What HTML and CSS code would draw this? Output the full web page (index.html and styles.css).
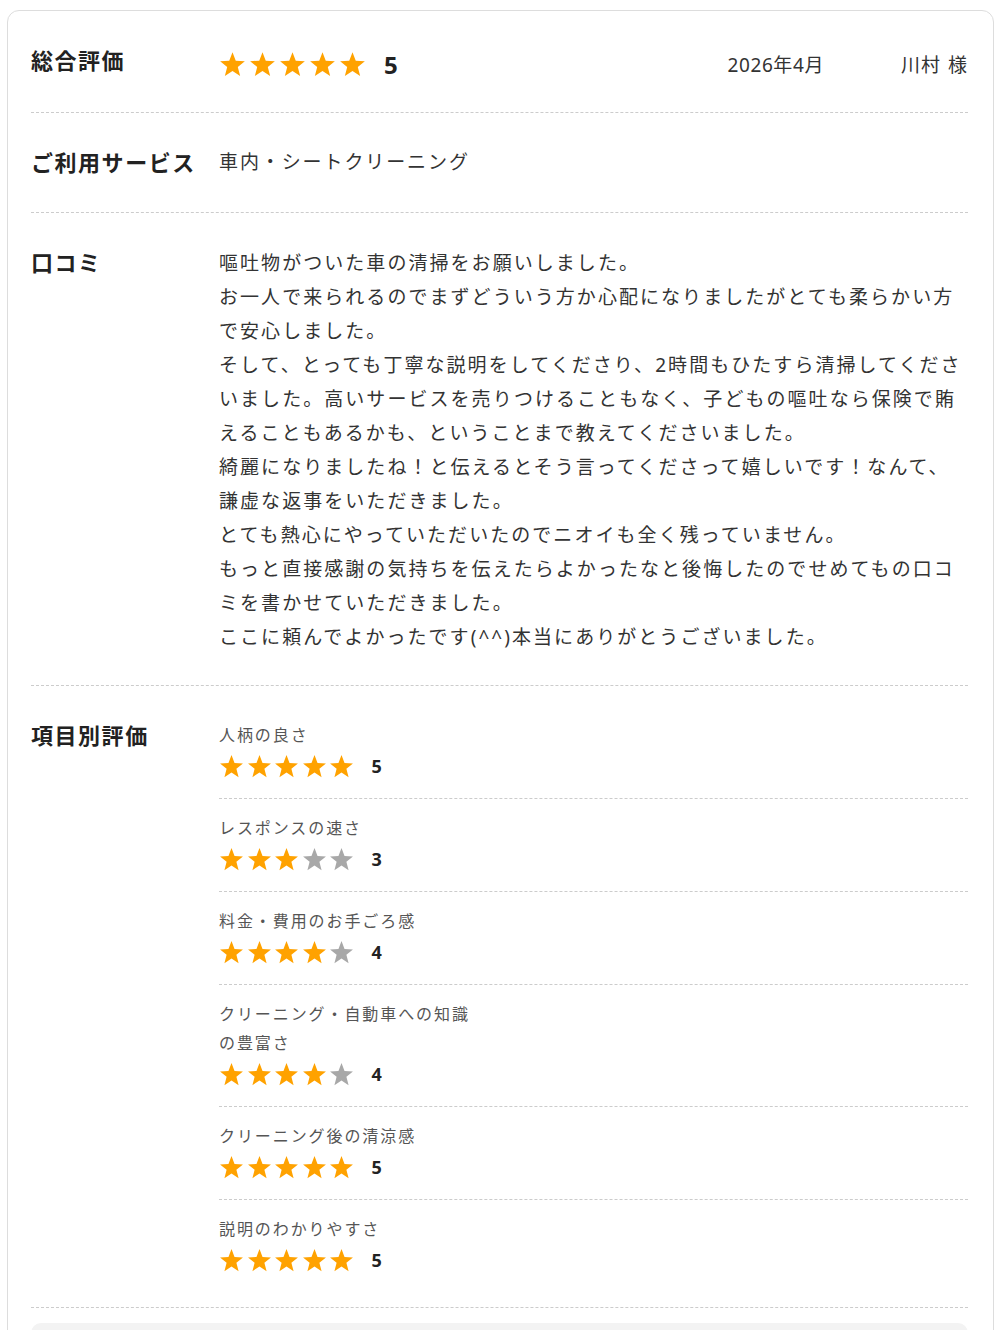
FILE: index.html
```html
<!DOCTYPE html>
<html lang="ja">
<head>
    <meta charset="UTF-8">
    <meta name="viewport" content="width=device-width, initial-scale=1.0">
    <title>口コミ</title>
    <link rel="stylesheet" href="styles.css">
</head>
<body>

    <svg width="0" height="0" class="defs">
        <symbol id="star" viewBox="0 0 24 24">
            <polygon points="12,1 14.9,8.6 23,9.1 16.7,14.2 18.8,22.2 12,17.7 5.2,22.2 7.3,14.2 1,9.1 9.1,8.6"/>
        </symbol>
    </svg>

    <div class="review">

        <div class="row summary">
            <div class="label">総合評価</div>
            <div class="value">
                <div class="stars big">
                    <svg class="on"><use href="#star"/></svg>
                    <svg class="on"><use href="#star"/></svg>
                    <svg class="on"><use href="#star"/></svg>
                    <svg class="on"><use href="#star"/></svg>
                    <svg class="on"><use href="#star"/></svg>
                    <span class="num">5</span>
                </div>
                <span class="date">2026年4月</span>
                <span class="name">川村 様</span>
            </div>
        </div>

        <div class="row">
            <div class="label">ご利用サービス</div>
            <div class="value service">車内・シートクリーニング</div>
        </div>

        <div class="row">
            <div class="label">口コミ</div>
            <div class="value comment">
                嘔吐物がついた車の清掃をお願いしました。<br>
                お一人で来られるのでまずどういう方か心配になりましたがとても柔らかい方で安心しました。<br>
                そして、とっても丁寧な説明をしてくださり、2時間もひたすら清掃してくださいました。高いサービスを売りつけることもなく、子どもの嘔吐なら保険で賄えることもあるかも、ということまで教えてくださいました。<br>
                綺麗になりましたね！と伝えるとそう言ってくださって嬉しいです！なんて、謙虚な返事をいただきました。<br>
                とても熱心にやっていただいたのでニオイも全く残っていません。<br>
                もっと直接感謝の気持ちを伝えたらよかったなと後悔したのでせめてもの口コミを書かせていただきました。<br>
                ここに頼んでよかったです(^^)本当にありがとうございました。
            </div>
        </div>

        <div class="row ratings">
            <div class="label">項目別評価</div>
            <div class="value items">

                <div class="item">
                    <div class="item-name">人柄の良さ</div>
                    <div class="stars small">
                        <svg class="on"><use href="#star"/></svg>
                        <svg class="on"><use href="#star"/></svg>
                        <svg class="on"><use href="#star"/></svg>
                        <svg class="on"><use href="#star"/></svg>
                        <svg class="on"><use href="#star"/></svg>
                        <span class="num">5</span>
                    </div>
                </div>

                <div class="item">
                    <div class="item-name">レスポンスの速さ</div>
                    <div class="stars small">
                        <svg class="on"><use href="#star"/></svg>
                        <svg class="on"><use href="#star"/></svg>
                        <svg class="on"><use href="#star"/></svg>
                        <svg class="off"><use href="#star"/></svg>
                        <svg class="off"><use href="#star"/></svg>
                        <span class="num">3</span>
                    </div>
                </div>

                <div class="item">
                    <div class="item-name">料金・費用のお手ごろ感</div>
                    <div class="stars small">
                        <svg class="on"><use href="#star"/></svg>
                        <svg class="on"><use href="#star"/></svg>
                        <svg class="on"><use href="#star"/></svg>
                        <svg class="on"><use href="#star"/></svg>
                        <svg class="off"><use href="#star"/></svg>
                        <span class="num">4</span>
                    </div>
                </div>

                <div class="item">
                    <div class="item-name">クリーニング・自動車への知識の豊富さ</div>
                    <div class="stars small">
                        <svg class="on"><use href="#star"/></svg>
                        <svg class="on"><use href="#star"/></svg>
                        <svg class="on"><use href="#star"/></svg>
                        <svg class="on"><use href="#star"/></svg>
                        <svg class="off"><use href="#star"/></svg>
                        <span class="num">4</span>
                    </div>
                </div>

                <div class="item">
                    <div class="item-name">クリーニング後の清涼感</div>
                    <div class="stars small">
                        <svg class="on"><use href="#star"/></svg>
                        <svg class="on"><use href="#star"/></svg>
                        <svg class="on"><use href="#star"/></svg>
                        <svg class="on"><use href="#star"/></svg>
                        <svg class="on"><use href="#star"/></svg>
                        <span class="num">5</span>
                    </div>
                </div>

                <div class="item">
                    <div class="item-name">説明のわかりやすさ</div>
                    <div class="stars small">
                        <svg class="on"><use href="#star"/></svg>
                        <svg class="on"><use href="#star"/></svg>
                        <svg class="on"><use href="#star"/></svg>
                        <svg class="on"><use href="#star"/></svg>
                        <svg class="on"><use href="#star"/></svg>
                        <span class="num">5</span>
                    </div>
                </div>

            </div>
        </div>

        <div class="reply"></div>

    </div>

</body>
</html>
```

FILE: styles.css
```css
body {
    margin: 0;
    font-family: "Noto Sans", "Noto Sans CJK JP", sans-serif;
    color: #333;
    background: #fff;
}

.defs {
    position: absolute;
}

.review {
    margin: 10px 7px 0;
    padding: 0 25px 0 23px;
    border: 1px solid #ddd;
    border-radius: 12px;
}

.row {
    display: flex;
    padding: 34px 0 35px;
    border-bottom: 1px dashed #ccc;
}

.label {
    flex: 0 0 188px;
    font-size: 22px;
    font-weight: bold;
    line-height: 30px;
    letter-spacing: 0.07em;
    color: #222;
}

.value {
    flex: 1;
    min-width: 0;
}

/* top row */
.summary {
    padding-bottom: 33px;
}
.summary .value {
    display: flex;
    align-items: center;
    height: 30px;
    padding-top: 4px;
}
.date {
    margin-left: auto;
    margin-right: 77px;
    font-size: 19px;
    letter-spacing: 0.6px;
}
.name {
    font-size: 19px;
    letter-spacing: 1px;
    word-spacing: 1px;
}

.service {
    font-size: 19px;
    line-height: 30px;
    letter-spacing: 0.1em;
}

.comment {
    font-size: 19px;
    line-height: 34px;
    letter-spacing: 2.05px;
    margin-top: -1px;
    margin-bottom: -4px;
}

/* stars */
.stars {
    display: flex;
    align-items: center;
}
.stars svg.on {
    fill: #ffa200;
}
.stars svg.off {
    fill: #a8a8a8;
}
.stars .num {
    font-weight: bold;
    color: #222;
}

.stars.big svg {
    width: 27px;
    height: 27px;
    margin-right: 3px;
}
.stars.big .num {
    font-size: 24px;
    margin-left: 15px;
}

.stars.small {
    height: 28px;
}
.stars.small svg {
    width: 25px;
    height: 25px;
    margin-right: 2.5px;
}
.stars.small .num {
    font-size: 18px;
    margin-left: 15px;
}

/* items */
.ratings {
    padding-bottom: 33px;
}
.items {
    margin-top: -14px;
}
.item {
    padding: 15px 0 18px;
    border-bottom: 1px dashed #ccc;
}
.item:last-child {
    padding-bottom: 0;
    border-bottom: none;
}
.item-name {
    max-width: 262px;
    font-size: 16px;
    line-height: 29px;
    letter-spacing: 0.12em;
    color: #555;
}
.items .stars {
    margin-top: 2px;
}

.reply {
    height: 60px;
    margin: 15px 0 20px;
    background: #f3f3f3;
    border-radius: 10px;
}
```
